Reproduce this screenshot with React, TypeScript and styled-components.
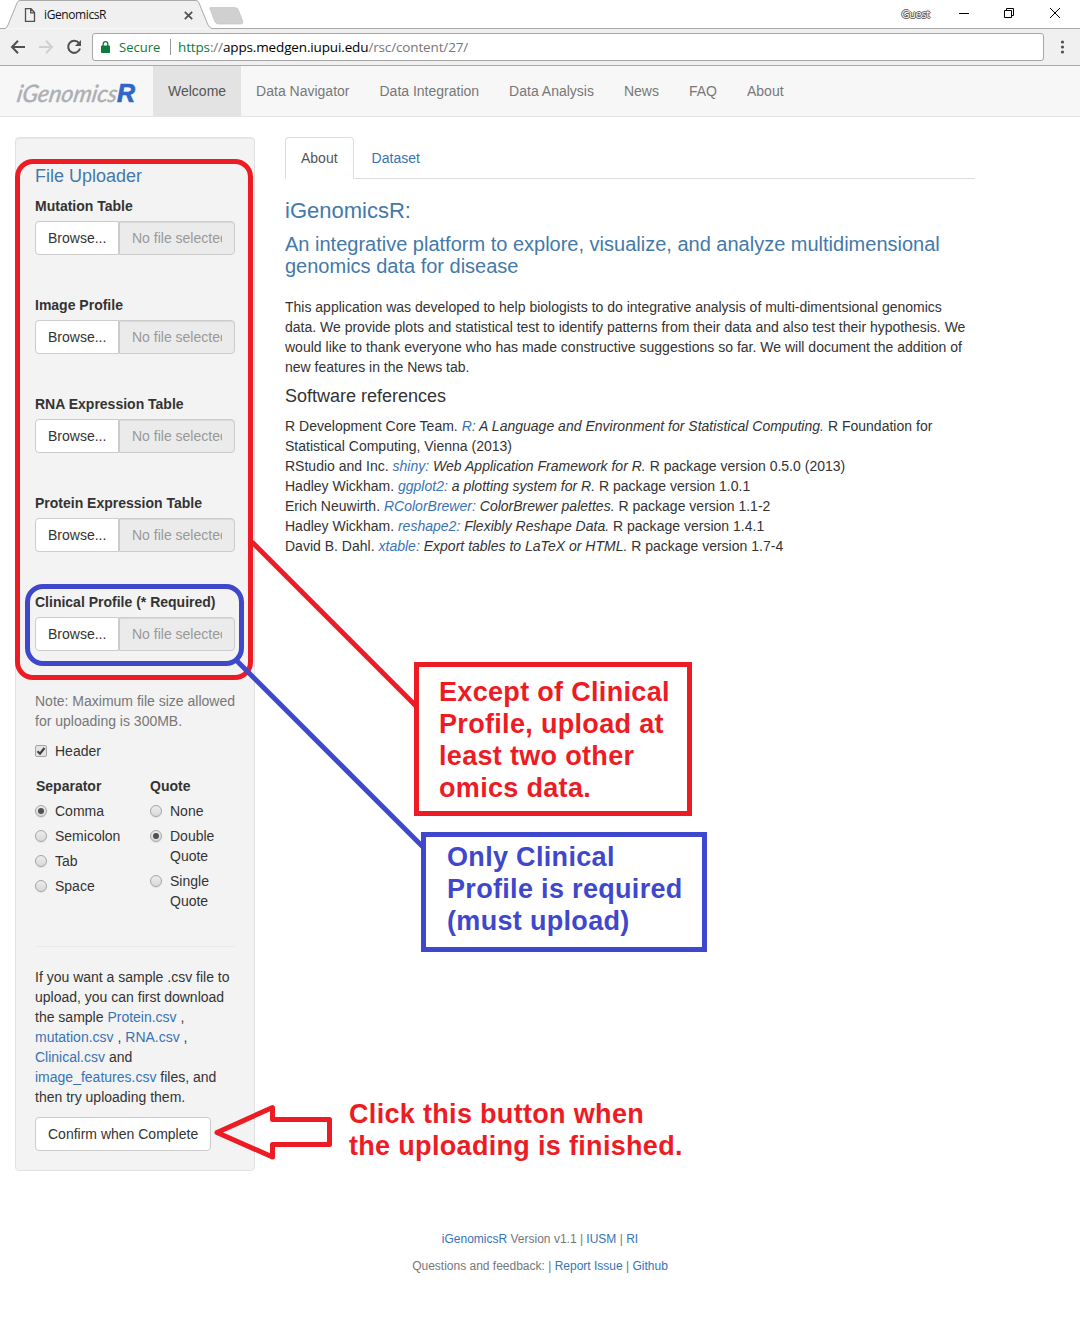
import React from "react";
import styled, { createGlobalStyle, css } from "styled-components";

const RED = "#ed1c24";
const BLUE = "#3f48cc";

const GlobalStyle = createGlobalStyle`
  * { box-sizing: border-box; }
  body {
    margin: 0;
    background: #fff;
    color: #333;
    font: 14px/20px "Liberation Sans", Arial, sans-serif;
  }
`;

const Screen = styled.div`
  position: relative;
  width: 1080px;
  height: 1320px;
  overflow: hidden;
`;

const TabStrip = styled.div`
  display: flex;
  align-items: flex-start;
  height: 29px;
  position: relative;
  font-family: "Open Sans", "Noto Sans", sans-serif;
`;
const StripArt = styled.svg`
  position: absolute;
  left: 0;
  top: 0;
`;
const BrowserTab = styled.div`
  position: relative;
  display: flex;
  align-items: center;
  width: 211px;
  height: 29px;
  padding: 1px 15px 0 24px;
  color: #111;
`;
const TabTitle = styled.span`
  flex: 1;
  margin-left: 8px;
  font-size: 12px;
  letter-spacing: -0.4px;
`;
const CloseIcon = styled.svg`
  margin-right: 3px;
`;
const WindowControls = styled.div`
  position: relative;
  display: flex;
  align-items: center;
  margin-left: auto;
  height: 28px;
  padding-right: 19px;
`;
const GuestName = styled.span`
  margin-right: 29px;
  font-size: 11px;
  letter-spacing: -0.3px;
  color: #fff;
  text-shadow: 1px 0 #555, -1px 0 #555, 0 1px #555, 0 -1px #555;
`;

const Toolbar = styled.div`
  display: flex;
  align-items: center;
  height: 37px;
  padding: 0 12px 0 10px;
  background: #f0f0f0;
  border-bottom: 1px solid #a9a9a9;
`;
const AddressBar = styled.div`
  display: flex;
  align-items: center;
  flex: 1;
  height: 28px;
  margin: 0 14px 0 9px;
  padding-left: 8px;
  border: 1px solid #a6a6a6;
  border-radius: 3px;
  background: #fff;
  font: 14px/20px "Open Sans", "Noto Sans", sans-serif;
`;
const Secure = styled.span`
  width: 41px;
  margin-left: 9px;
  font-size: 13px;
  letter-spacing: 0.02px;
  color: #0b7b3e;
  white-space: nowrap;
`;
const AddressDivider = styled.span`
  width: 1px;
  height: 16px;
  margin: 0 7px 0 10px;
  background: #999;
`;
const Url = styled.span`
  font-size: 13.5px;
  letter-spacing: -0.14px;
  color: #777;
  white-space: nowrap;
`;
const Scheme = styled.span`color: #0b7b3e;`;
const Host = styled.span`color: #000;`;

const Navbar = styled.nav`
  display: flex;
  height: 51px;
  background: #f7f7f7;
  border-bottom: 1px solid #e4e4e4;
`;
const Brand = styled.div`
  width: 153px;
  height: 50px;
`;
const NavItem = styled.a<{ $active?: boolean }>`
  padding: 15px;
  color: ${(p) => (p.$active ? "#555" : "#777")};
  background: ${(p) => (p.$active ? "#e3e3e3" : "transparent")};
`;

const Page = styled.div`
  display: flex;
  align-items: flex-start;
  gap: 30px;
  height: 1054px;
  padding: 0 15px;
  margin-top: 20px;
`;
const Sidebar = styled.aside`
  width: 240px;
  height: 1034px;
  padding: 28.8px 19px 19px;
  border: 1px solid #e1e1e1;
  border-radius: 4px;
  background: #f3f3f3;
  box-shadow: inset 0 1px 1px rgba(0, 0, 0, 0.05);
`;
const Heading = styled.h4<{ $size: number; $color?: string; $gap?: number }>`
  margin: 0 0 ${(p) => p.$gap ?? 10}px;
  font-size: ${(p) => p.$size}px;
  line-height: 1.1;
  font-weight: 500;
  color: ${(p) => p.$color ?? "#333"};
`;
const UploadGroup = styled.div`
  height: 99px;
`;
const FieldLabel = styled.div`
  margin-bottom: 5px;
  font-weight: 700;
  white-space: nowrap;
`;
const FileInput = styled.div`
  display: flex;
  height: 34px;
`;
const buttonLook = css`
  height: 34px;
  padding: 6px 12px;
  border: 1px solid #ccc;
  background: #fff;
  color: #333;
  font: inherit;
`;
const BrowseButton = styled.button`
  ${buttonLook}
  width: 84px;
  border-radius: 4px 0 0 4px;
  white-space: nowrap;
`;
const FileName = styled.div`
  width: 116px;
  height: 34px;
  padding: 6px 12px;
  border: 1px solid #ccc;
  border-radius: 0 4px 4px 0;
  background: #ebebeb;
  box-shadow: inset 0 1px 1px rgba(0, 0, 0, 0.075);
  color: #999;
`;
const ClippedText = styled.div`
  overflow: hidden;
  white-space: nowrap;
`;
const Note = styled.p`
  margin: 0 -5px 10px 0;
  color: #777;
`;
const Option = styled.div`
  display: flex;
  align-items: flex-start;
  gap: 8px;
  margin-bottom: 5px;
`;
const Radio = styled.span<{ $on?: boolean }>`
  display: flex;
  align-items: center;
  justify-content: center;
  flex: none;
  width: 12px;
  height: 12px;
  margin-top: 4px;
  border: 1px solid #a5a5a5;
  border-radius: 50%;
  background: linear-gradient(#ececec, #d9d9d9);
  box-shadow: 0 1px 1px rgba(0, 0, 0, 0.08);
  &::after {
    content: "";
    width: 6px;
    height: 6px;
    border-radius: 50%;
    background: ${(p) => (p.$on ? "#505050" : "transparent")};
  }
`;
const CheckBox = styled.svg`
  flex: none;
  margin-top: 4px;
`;
const OptionColumns = styled.div`
  display: grid;
  grid-template-columns: 115px 85px;
  height: 171px;
  margin-top: 15px;
  border-bottom: 1px solid #e9e9e9;
`;
const OptionTitle = styled.div<{ $indent: number }>`
  margin: 0 0 5px ${(p) => p.$indent}px;
  font-weight: 700;
`;
const SampleText = styled.p`
  margin: 20px -5px 10px 0;
`;
const Link = styled.a`
  color: #3873b3;
`;
const ConfirmButton = styled.button`
  ${buttonLook}
  width: 176px;
  border-radius: 4px;
  white-space: nowrap;
`;

const Content = styled.main`
  width: 690px;
`;
const Tabs = styled.div`
  display: flex;
  gap: 2px;
  height: 42px;
  margin-bottom: 20px;
  border-bottom: 1px solid #ddd;
`;
const TabLink = styled.a<{ $active?: boolean }>`
  height: 42px;
  padding: 10px 15px;
  border: 1px solid ${(p) => (p.$active ? "#ddd" : "transparent")};
  border-bottom-color: ${(p) => (p.$active ? "#fff" : "transparent")};
  border-radius: 4px 4px 0 0;
  color: ${(p) => (p.$active ? "#555" : "#3873b3")};
`;
const Intro = styled.p`
  margin: 0 -10px 10px 0;
`;
const Line = styled.span<{ $spacing?: number }>`
  display: block;
  white-space: nowrap;
  letter-spacing: ${(p) => p.$spacing ?? 0}px;
`;

const Footer = styled.footer`
  display: flex;
  flex-direction: column;
  align-items: center;
  gap: 10px;
  padding-top: 40px;
  font-size: 12px;
  line-height: 17px;
  color: #777;
`;

const Outline = styled.div<{ $x: number; $y: number; $w: number; $h: number; $color: string; $radius?: number }>`
  position: absolute;
  left: ${(p) => p.$x}px;
  top: ${(p) => p.$y}px;
  width: ${(p) => p.$w}px;
  height: ${(p) => p.$h}px;
  border: 5px solid ${(p) => p.$color};
  border-radius: ${(p) => p.$radius ?? 0}px;
`;
const Callout = styled.div<{ $x: number; $y: number; $color: string }>`
  position: absolute;
  left: ${(p) => p.$x}px;
  top: ${(p) => p.$y}px;
  color: ${(p) => p.$color};
  font-size: 27px;
  line-height: 32px;
  font-weight: 700;
  letter-spacing: 0.32px;
`;
const Connectors = styled.svg`
  position: absolute;
  left: 0;
  top: 0;
`;

const uploads = [
  "Mutation Table",
  "Image Profile",
  "RNA Expression Table",
  "Protein Expression Table",
  "Clinical Profile (* Required)",
];
const navItems = ["Welcome", "Data Navigator", "Data Integration", "Data Analysis", "News", "FAQ", "About"];

const references = [
  { who: "RStudio and Inc. ", link: "shiny", title: " Web Application Framework for R.", rest: " R package version 0.5.0 (2013)" },
  { who: "Hadley Wickham. ", link: "ggplot2", title: " a plotting system for R.", rest: " R package version 1.0.1" },
  { who: "Erich Neuwirth. ", link: "RColorBrewer", title: " ColorBrewer palettes.", rest: " R package version 1.1-2" },
  { who: "Hadley Wickham. ", link: "reshape2", title: " Flexibly Reshape Data.", rest: " R package version 1.4.1" },
  { who: "David B. Dahl. ", link: "xtable", title: " Export tables to LaTeX or HTML.", rest: " R package version 1.7-4" },
];

function BrowserChrome() {
  return (
    <>
      <TabStrip>
        <StripArt width="1080" height="29">
          <path d="M0 28.5H5Q7 28 8 25L17 3Q18 .5 20 .5H196Q198 .5 199 3L208 25Q210 28.5 212 28.5H1080" fill="#f0f0f0" stroke="#a9a9a9" />
          <path d="M211 7.500H234Q237 7.500 238 9L243 22Q243 24 241 24H219Q216 24 215 22L210 9Q209 7.500 211 7.500Z" fill="#d0d0d0" stroke="#c4c4c4" strokeWidth=".7" />
        </StripArt>
        <BrowserTab>
          <svg width="12" height="14" viewBox="0 0 12 14" fill="none" stroke="#505050" strokeWidth="1.3">
            <path d="M1.500 .7H7L10.500 4.500V13.300H1.500ZM6.700 .7V4.800H10.500" />
          </svg>
          <TabTitle>iGenomicsR</TabTitle>
          <CloseIcon width="9" height="9" viewBox="0 0 9 9" stroke="#505050" strokeWidth="1.700">
            <path d="M.8 .8 8.200 8.200M8.200 .8.8 8.200" />
          </CloseIcon>
        </BrowserTab>
        <WindowControls>
          <GuestName>Guest</GuestName>
          <svg width="102" height="12" viewBox="0 0 102 12" fill="none" stroke="#000">
            <path d="M0 5.500H10M45.500 2.500H52.500V9.500H45.500ZM47.500 2V.5H54.500V7.500H53M91 0 101 10M101 0 91 10" />
          </svg>
        </WindowControls>
      </TabStrip>
      <Toolbar>
        <svg width="73" height="20" viewBox="0 0 73 20" fill="none" strokeWidth="2">
          <path d="M15 10H2.500M8 3.800 2 10 8 16.200" stroke="#505050" />
          <path d="M29 10H41.500M36 3.800 42 10 36 16.200" stroke="#d0d0d0" />
          <path d="M69 6.200A6 6 0 1 0 70 11.500" stroke="#505050" />
          <path d="M71 3V9H65Z" fill="#505050" />
        </svg>
        <AddressBar>
          <svg width="9" height="12" viewBox="0 0 9 12">
            <path d="M.5 5H8.500V11.500H.5Z" fill="#0b7b3e" stroke="#0b7b3e" strokeLinejoin="round" />
            <path d="M2.200 5V3A2.300 2.300 0 0 1 6.800 3V5" fill="none" stroke="#0b7b3e" strokeWidth="1.300" />
          </svg>
          <Secure>Secure</Secure>
          <AddressDivider />
          <Url>
            <Scheme>https</Scheme>://<Host>apps.medgen.iupui.edu</Host>/rsc/content/27/
          </Url>
        </AddressBar>
        <svg width="10" height="16" viewBox="0 0 10 16" fill="#505050">
          <circle cx="4.500" cy="3" r="1.600" />
          <circle cx="4.500" cy="8" r="1.600" />
          <circle cx="4.500" cy="13" r="1.600" />
        </svg>
      </Toolbar>
    </>
  );
}

function RadioOption({ label, on }: { label: string; on?: boolean }) {
  return (
    <Option>
      <Radio $on={on} />
      <span>{label}</span>
    </Option>
  );
}

export default function App() {
  return (
    <Screen>
      <GlobalStyle />
      <BrowserChrome />
      <Navbar>
        <Brand>
          <svg width="153" height="50">
            <text transform="translate(16 35.500) skewX(-10)" fontFamily="Lato, sans-serif" fontStyle="italic" fontWeight="500" fontSize="24" fill="#aeafb4" stroke="#aeafb4" strokeWidth=".3" textLength="100" lengthAdjust="spacingAndGlyphs">iGenomics</text>
            <text x="117" y="35.500" fontFamily="Liberation Sans, sans-serif" fontStyle="italic" fontWeight="700" fontSize="25" fill="#2f67c8" stroke="#2f67c8" strokeWidth=".7">R</text>
          </svg>
        </Brand>
        {navItems.map((item, i) => (
          <NavItem key={item} $active={i === 0}>{item}</NavItem>
        ))}
      </Navbar>
      <Page>
        <Sidebar>
          <Heading $size={18} $color="#4479a9" $gap={9.4}>File Uploader</Heading>
          {uploads.map((label) => (
            <UploadGroup key={label}>
              <FieldLabel>{label}</FieldLabel>
              <FileInput>
                <BrowseButton>Browse...</BrowseButton>
                <FileName><ClippedText>No file selected</ClippedText></FileName>
              </FileInput>
            </UploadGroup>
          ))}
          <Note>Note: Maximum file size allowed<br />for uploading is 300MB.</Note>
          <Option>
            <CheckBox width="12" height="12" viewBox="0 0 12 12">
              <rect x=".5" y=".5" width="11" height="11" rx="1.500" fill="#e4e4e4" stroke="#a5a5a5" />
              <path d="M2.500 6.200 5 8.700 9.500 3" fill="none" stroke="#404040" strokeWidth="2.200" />
            </CheckBox>
            <span>Header</span>
          </Option>
          <OptionColumns>
            <div>
              <OptionTitle $indent={1}>Separator</OptionTitle>
              <RadioOption label="Comma" on />
              <RadioOption label="Semicolon" />
              <RadioOption label="Tab" />
              <RadioOption label="Space" />
            </div>
            <div>
              <OptionTitle $indent={0}>Quote</OptionTitle>
              <RadioOption label="None" />
              <RadioOption label="Double Quote" on />
              <RadioOption label="Single Quote" />
            </div>
          </OptionColumns>
          <SampleText>
            If you want a sample .csv file to<br />
            upload, you can first download<br />
            the sample <Link>Protein.csv</Link> ,<br />
            <Link>mutation.csv</Link> , <Link>RNA.csv</Link> ,<br />
            <Link>Clinical.csv</Link> and<br />
            <Link>image_features.csv</Link> files, and<br />
            then try uploading them.
          </SampleText>
          <ConfirmButton>Confirm when Complete</ConfirmButton>
        </Sidebar>
        <Content>
          <Tabs>
            <TabLink $active>About</TabLink>
            <TabLink>Dataset</TabLink>
          </Tabs>
          <Heading $size={22} $color="#4479a9">iGenomicsR:</Heading>
          <Heading $size={20} $color="#4479a9" $gap={20}>
            <Line>An integrative platform to explore, visualize, and analyze multidimensional</Line>
            <Line>genomics data for disease</Line>
          </Heading>
          <Intro>
            <Line>This application was developed to help biologists to do integrative analysis of multi-dimentsional genomics</Line>
            <Line>data. We provide plots and statistical test to identify patterns from their data and also test their hypothesis. We</Line>
            <Line $spacing={0.008}>would like to thank everyone who has made constructive suggestions so far. We will document the addition of</Line>
            <Line>new features in the News tab.</Line>
          </Intro>
          <Heading $size={18} $gap={9}>Software references</Heading>
          <Line $spacing={0.012}>R Development Core Team. <em><Link>R:</Link> A Language and Environment for Statistical Computing.</em> R Foundation for</Line>
          <Line>Statistical Computing, Vienna (2013)</Line>
          {references.map((r) => (
            <Line key={r.link} $spacing={0.008}>{r.who}<em><Link>{r.link}:</Link>{r.title}</em>{r.rest}</Line>
          ))}
        </Content>
      </Page>
      <Footer>
        <div><Link>iGenomicsR</Link> Version v1.1 | <Link>IUSM</Link> | <Link>RI</Link></div>
        <div>Questions and feedback: | <Link>Report Issue</Link> | <Link>Github</Link></div>
      </Footer>

      <Outline $x={15} $y={159} $w={238} $h={521} $color={RED} $radius={18} />
      <Outline $x={25} $y={584} $w={219} $h={82} $color={BLUE} $radius={18} />
      <Outline $x={414} $y={662} $w={278} $h={154} $color={RED} />
      <Outline $x={421} $y={832} $w={286} $h={120} $color={BLUE} />
      <Connectors width="1080" height="1320" fill="none" strokeWidth="5">
        <path d="M252 542 416 706" stroke={RED} />
        <path d="M236 660 423 847" stroke={BLUE} />
        <path d="M217 1132.500 272.500 1107.500V1119.500H329.500V1144.500H272.500V1157Z" stroke={RED} strokeLinejoin="round" />
      </Connectors>
      <Callout $x={439} $y={676} $color={RED}>Except of Clinical<br />Profile, upload at<br />least two other<br />omics data.</Callout>
      <Callout $x={447} $y={841} $color={BLUE}>Only Clinical<br />Profile is required<br />(must upload)</Callout>
      <Callout $x={349} $y={1098} $color={RED}>Click this button when<br />the uploading is finished.</Callout>
    </Screen>
  );
}
